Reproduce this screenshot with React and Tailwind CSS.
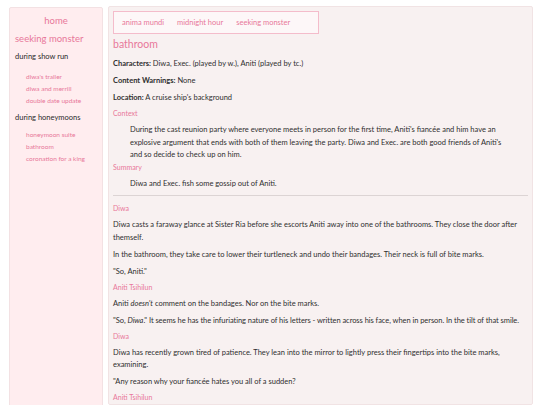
import React from "react";

const pink = "text-[#e8789a]";

const Label = ({ children }) => (
  <p className={`text-[7px] leading-[12px] ${pink} -mt-[2px] mb-[5px]`}>{children}</p>
);

const P = ({ children, className = "" }) => (
  <p className={`leading-[12.5px] mb-[4.5px] ${className}`}>{children}</p>
);

const Sidebar = () => (
  <aside className="w-[94px] shrink-0 bg-[#ffedef] border border-[#f3e1e3] rounded-[2px] px-[5px] pt-[7px] min-h-[420px]">
    <p className={`text-center text-[9.5px] ${pink} leading-[12px]`}>home</p>
    <p className={`text-[9.5px] ${pink} leading-[12px] mt-[6px]`}>seeking monster</p>
    <p className="text-[7.5px] text-[#2b2b2b] leading-[12px] mt-[6px]">during show run</p>
    <ul className={`text-[6.5px] ${pink} pl-[11px] mt-[9px] flex flex-col gap-[2px] leading-[10px]`}>
      <li>diwa's trailer</li>
      <li>diwa and merrill</li>
      <li>double date update</li>
    </ul>
    <p className="text-[7.5px] text-[#2b2b2b] leading-[12px] mt-[6px]">during honeymoons</p>
    <ul className={`text-[6.5px] ${pink} pl-[11px] mt-[6px] flex flex-col gap-[2px] leading-[10px]`}>
      <li>honeymoon suite</li>
      <li>bathroom</li>
      <li>coronation for a king</li>
    </ul>
  </aside>
);

export default function App() {
  return (
    <div
      className="bg-white h-[405px] overflow-hidden flex gap-[5px] pl-[9px] pr-[7px] pt-[6px] text-[#2f2f2f] text-[7.5px]"
      style={{ fontFamily: "Lato, 'Noto Sans', sans-serif" }}
    >
      <div className="pt-[1px]">
        <Sidebar />
      </div>
      <main className="flex-1 bg-[#f8f1f1] border border-[#f1e3e4] rounded-[2px] pl-[4px] pr-[4px] pt-[4px]">
        <nav className={`w-[206px] border border-[#f4bccb] bg-[#fdf7f8] h-[23px] flex items-center gap-[13px] px-[8px] text-[7.5px] ${pink}`}>
          <span>anima mundi</span>
          <span>midnight hour</span>
          <span>seeking monster</span>
        </nav>
        <h1 className={`text-[10.5px] leading-[13px] ${pink} mt-[4px] mb-[7px]`}>bathroom</h1>
        <P><b>Characters:</b> Diwa, Exec. (played by w.), Aniti (played by tc.)</P>
        <P><b>Content Warnings:</b> None</P>
        <P><b>Location:</b> A cruise ship's background</P>
        <Label>Context</Label>
        <p className="leading-[12.5px] pl-[17px] pr-[20px] mb-[1px]">
          During the cast reunion party where everyone meets in person for the first time, Aniti's fiancée and him have an explosive argument that ends with both of them leaving the party. Diwa and Exec. are both good friends of Aniti's and so decide to check up on him.
        </p>
        <Label>Summary</Label>
        <p className="leading-[12.5px] pl-[17px]">Diwa and Exec. fish some gossip out of Aniti.</p>
        <hr className="border-t border-[#dcd4d4] mt-[5px] mb-[8px]" />
        <Label>Diwa</Label>
        <P className="pr-[6px]">
          Diwa casts a faraway glance at Sister Ria before she escorts Aniti away into one of the bathrooms. They close the door after themself.
        </P>
        <P>In the bathroom, they take care to lower their turtleneck and undo their bandages. Their neck is full of bite marks.</P>
        <P>"So, Aniti."</P>
        <Label>Aniti Tsihilun</Label>
        <P>Aniti <i>doesn't</i> comment on the bandages. Nor on the bite marks.</P>
        <P className="tracking-[-0.05px]">"So, <i>Diwa</i>." It seems he has the infuriating nature of his letters - written across his face, when in person. In the tilt of that smile.</P>
        <Label>Diwa</Label>
        <P className="pr-[6px]">Diwa has recently grown tired of patience. They lean into the mirror to lightly press their fingertips into the bite marks, examining.</P>
        <P>"Any reason why your fiancée hates you all of a sudden?</P>
        <Label>Aniti Tsihilun</Label>
        <P>Aniti tilts his shoulder against the wall. A fleeting glance given toward the door. As though wishing Exec. had already returned.</P>
      </main>
    </div>
  );
}
